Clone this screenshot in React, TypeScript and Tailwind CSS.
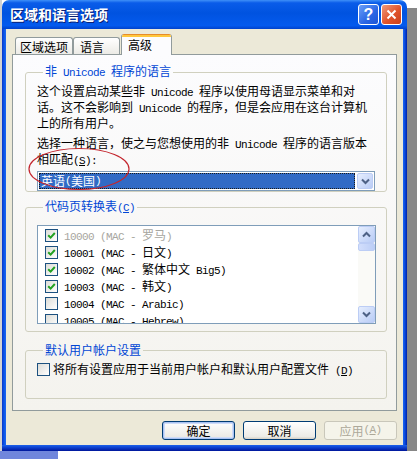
import type { ReactNode } from "react";

// half-width latin, close to SimSun 12px metrics (6px per char)
function M({ children }: { children: ReactNode }) {
  return (
    <span className="whitespace-pre font-['Liberation_Mono',monospace] text-[11px] tracking-[-0.6px]">
      {children}
    </span>
  );
}

function CheckBox({ checked = false }: { checked?: boolean }) {
  return (
    <span className="flex h-[13px] w-[13px] shrink-0 items-center justify-center border border-[#1c5180] bg-[linear-gradient(135deg,#dcdcd7,#ffffff)]">
      {checked && (
        <svg width="9" height="9" viewBox="0 0 9 9">
          <path d="M1.2 4.2 L3.6 6.6 L7.8 2" stroke="#21a121" strokeWidth="2" fill="none" />
        </svg>
      )}
    </span>
  );
}

function Chevron({ up = false }: { up?: boolean }) {
  return (
    <svg width="9" height="7" viewBox="0 0 9 7">
      <path
        d={up ? "M1 5.5 L4.5 2 L8 5.5" : "M1 1.5 L4.5 5 L8 1.5"}
        stroke="#4d6185"
        strokeWidth="2"
        fill="none"
      />
    </svg>
  );
}

function ScrollBtn({ up = false }: { up?: boolean }) {
  return (
    <div className="flex h-[17px] w-[17px] items-center justify-center rounded-[2px] border border-[#bccdf5] bg-[linear-gradient(135deg,#e6eefe,#b9ccf6)]">
      <Chevron up={up} />
    </div>
  );
}

const codePages = [
  { id: "10000", name: "罗马", checked: true, dim: true },
  { id: "10001", name: "日文", checked: true },
  { id: "10002", name: "繁体中文", extra: " Big5", checked: true },
  { id: "10003", name: "韩文", checked: true },
  { id: "10004", latin: "Arabic", checked: false },
  { id: "10005", latin: "Hebrew", checked: false },
];

function XpButton({
  children,
  primary = false,
  disabled = false,
}: {
  children: ReactNode;
  primary?: boolean;
  disabled?: boolean;
}) {
  return (
    <div
      className={
        disabled
          ? "flex h-[19px] w-[73px] items-center justify-center rounded-[3px] border border-[#c9c7ba] bg-[#f5f4ea] text-[#aca899]"
          : primary
            ? "flex h-[19px] w-[73px] items-center justify-center rounded-[3px] border border-[#003c74] bg-[linear-gradient(180deg,#ffffff,#ecebe6_85%,#d6d0c5)] shadow-[inset_0_0_0_1px_#a9c2f2,inset_0_0_0_2px_#cfdcf8]"
            : "flex h-[19px] w-[73px] items-center justify-center rounded-[3px] border border-[#003c74] bg-[linear-gradient(180deg,#ffffff,#ecebe6_85%,#d6d0c5)]"
      }
    >
      {children}
    </div>
  );
}

function Window() {
  return (
    <div className="flex w-[405px] flex-col overflow-hidden rounded-t-[7px]">
      {/* title bar */}
      <div className="flex h-[29px] items-center justify-between bg-[linear-gradient(180deg,#3f90f8_0%,#0a5ce9_10%,#0053e0_45%,#045aee_88%,#0042cc_100%)] pl-[8px] pr-[5px]">
        <span className="text-[14px] font-bold text-white [text-shadow:1px_1px_0_#0a1f74]">
          区域和语言选项
        </span>
        <div className="flex gap-[2px]">
          <div className="flex h-[21px] w-[21px] items-center justify-center rounded-[3px] border border-white bg-[linear-gradient(135deg,#6b9ff8,#2a66e4_60%,#1c55d6)] font-['Liberation_Sans',sans-serif] text-[16px] font-bold leading-none text-white">
            ?
          </div>
          <div className="flex h-[21px] w-[21px] items-center justify-center rounded-[3px] border border-white bg-[linear-gradient(135deg,#ee9a7c,#e0542c_55%,#c9401c)]">
            <svg width="11" height="11" viewBox="0 0 11 11">
              <path d="M1.5 1.5 L9.5 9.5 M9.5 1.5 L1.5 9.5" stroke="#fff" strokeWidth="2" />
            </svg>
          </div>
        </div>
      </div>

      <div className="flex">
        <div className="w-[4px] bg-[linear-gradient(90deg,#0a35c8,#0a55e8,#1d66f0)]" />
        <div className="flex h-[416px] w-[397px] flex-col bg-[#ece9d8]">
          {/* tabs */}
          <div className="flex h-[25px] items-end pl-[9px]">
            <div className="flex h-[17px] w-[58px] items-center rounded-t-[3px] border border-b-0 border-[#919b9c] bg-[linear-gradient(180deg,#ffffff,#ecebe6)] pl-[4px] pt-[1px]">
              区域选项
            </div>
            <div className="flex h-[17px] w-[47px] items-center rounded-t-[3px] border border-b-0 border-[#919b9c] bg-[linear-gradient(180deg,#ffffff,#ecebe6)] pl-[6px] pt-[1px]">
              语言
            </div>
            <div className="relative z-10 -mb-px ml-[1px] flex h-[21px] w-[51px] flex-col overflow-hidden rounded-t-[3px] border-x border-[#919b9c] bg-[#fcfcfe]">
              <div className="h-[1px] bg-[#e68b2c]" />
              <div className="h-[2px] bg-[#ffc73c]" />
              <div className="pl-[6px] pt-[1px] leading-[14px]">高级</div>
            </div>
          </div>

          {/* tab page */}
          <div className="ml-[6px] flex h-[357px] w-[385px] flex-col border border-[#919b9c] bg-[linear-gradient(180deg,#fcfcfe,#f4f3ee)] pl-[12px] pr-[9px] pt-[9px]">
            <fieldset className="h-[128px] rounded-[3px] border border-[#d0d0bf] pl-[11px]">
              <legend className="ml-[6px] px-[2px] leading-[14px] text-[#0046d5]">
                非<M> Unicode </M>程序的语言
              </legend>
              <div className="mt-[4px] whitespace-nowrap leading-[13px]">
                <div>
                  这个设置启动某些非<M> Unicode </M>程序以使用母语显示菜单和对
                </div>
                <div>
                  话。这不会影响到<M> Unicode </M>的程序，但是会应用在这台计算机
                </div>
                <div>上的所有用户。</div>
              </div>
              <div className="mt-[7px] whitespace-nowrap leading-[13px]">
                <div>
                  选择一种语言，使之与您想使用的非<M> Unicode </M>程序的语言版本
                </div>
                <div>
                  相匹配<M>(<u>S</u>):</M>
                </div>
              </div>
              <div className="mt-[3px] flex h-[20px] w-[338px] gap-[2px] border border-[#7f9db9] bg-white p-[1px]">
                <div className="flex flex-1 items-center border border-dotted border-[#1a1a1a] bg-[#316ac5] pl-[1px] text-white">
                  英语<M>(</M>美国<M>)</M>
                </div>
                <div className="flex w-[16px] items-center justify-center rounded-[2px] border border-[#bccdf5] bg-[linear-gradient(135deg,#e6eefe,#b9ccf6)]">
                  <Chevron />
                </div>
              </div>
            </fieldset>

            <fieldset className="mt-[7px] h-[133px] rounded-[3px] border border-[#d0d0bf] pl-[11px]">
              <legend className="ml-[6px] px-[2px] leading-[14px] text-[#0046d5]">
                代码页转换表<M>(<u>C</u>)</M>
              </legend>
              <div className="mt-[10px] flex h-[99px] w-[339px] border border-[#7f9db9] bg-white">
                <div className="flex-1 overflow-hidden pl-[7px] pt-[1px]">
                  {codePages.map((cp) => (
                    <div key={cp.id} className="flex h-[17px] items-center gap-[6px] whitespace-nowrap">
                      <CheckBox checked={cp.checked} />
                      <span className={cp.dim ? "text-[#a7a6a0]" : ""}>
                        <M>{cp.id} (MAC - </M>
                        {cp.name}
                        {cp.extra && <M>{cp.extra}</M>}
                        {cp.latin && <M>{cp.latin}</M>}
                        <M>)</M>
                      </span>
                    </div>
                  ))}
                </div>
                <div className="flex w-[17px] flex-col bg-[#fafaf7]">
                  <ScrollBtn up />
                  <div className="h-[8px] rounded-[2px] border border-[#bccdf5] bg-[linear-gradient(90deg,#d2defc,#bccef6)]" />
                  <div className="flex-1" />
                  <ScrollBtn />
                </div>
              </div>
            </fieldset>

            <fieldset className="mt-[11px] h-[56px] rounded-[3px] border border-[#d0d0bf] pl-[11px]">
              <legend className="ml-[6px] px-[2px] leading-[14px] text-[#0046d5]">
                默认用户帐户设置
              </legend>
              <div className="mt-[5px] flex h-[15px] items-center gap-[3px] whitespace-nowrap">
                <CheckBox />
                <span>
                  将所有设置应用于当前用户帐户和默认用户配置文件<M> (<u>D</u>)</M>
                </span>
              </div>
            </fieldset>
          </div>

          {/* dialog buttons */}
          <div className="flex justify-end gap-[8px] pr-[6px] pt-[10px]">
            <XpButton primary>确定</XpButton>
            <XpButton>取消</XpButton>
            <XpButton disabled>
              应用<M>(<u>A</u>)</M>
            </XpButton>
          </div>
        </div>
        <div className="w-[4px] bg-[linear-gradient(270deg,#0020a8,#0748dc,#1d66f0)]" />
      </div>
      <div className="h-[6px] bg-[linear-gradient(180deg,#1c62ec,#0a3ac8,#00169a)]" />
    </div>
  );
}

export default function App() {
  return (
    <div className="relative flex h-[459px] w-[417px] flex-col overflow-hidden bg-white font-['Noto_Sans_CJK_SC',sans-serif] text-[12px] text-black">
      <div className="flex h-[451px]">
        <div className="w-[2px] bg-[#d2d2d2]" />
        <Window />
        <div className="flex w-[10px] flex-col">
          <div className="h-[8px] bg-white" />
          <div className="flex-1 bg-[#878787]" />
        </div>
      </div>
      <div className="flex h-[8px]">
        <div className="w-[58px] bg-[#7086dc]" />
        <div className="flex-1 bg-white" />
      </div>

      {/* hand-drawn red annotation round the selected language */}
      <svg className="absolute left-[26px] top-[146px]" width="106" height="48" viewBox="0 0 106 48">
        <ellipse cx="53" cy="23" rx="50" ry="20.5" fill="none" stroke="#c4262e" strokeWidth="1.2" />
      </svg>
    </div>
  );
}
